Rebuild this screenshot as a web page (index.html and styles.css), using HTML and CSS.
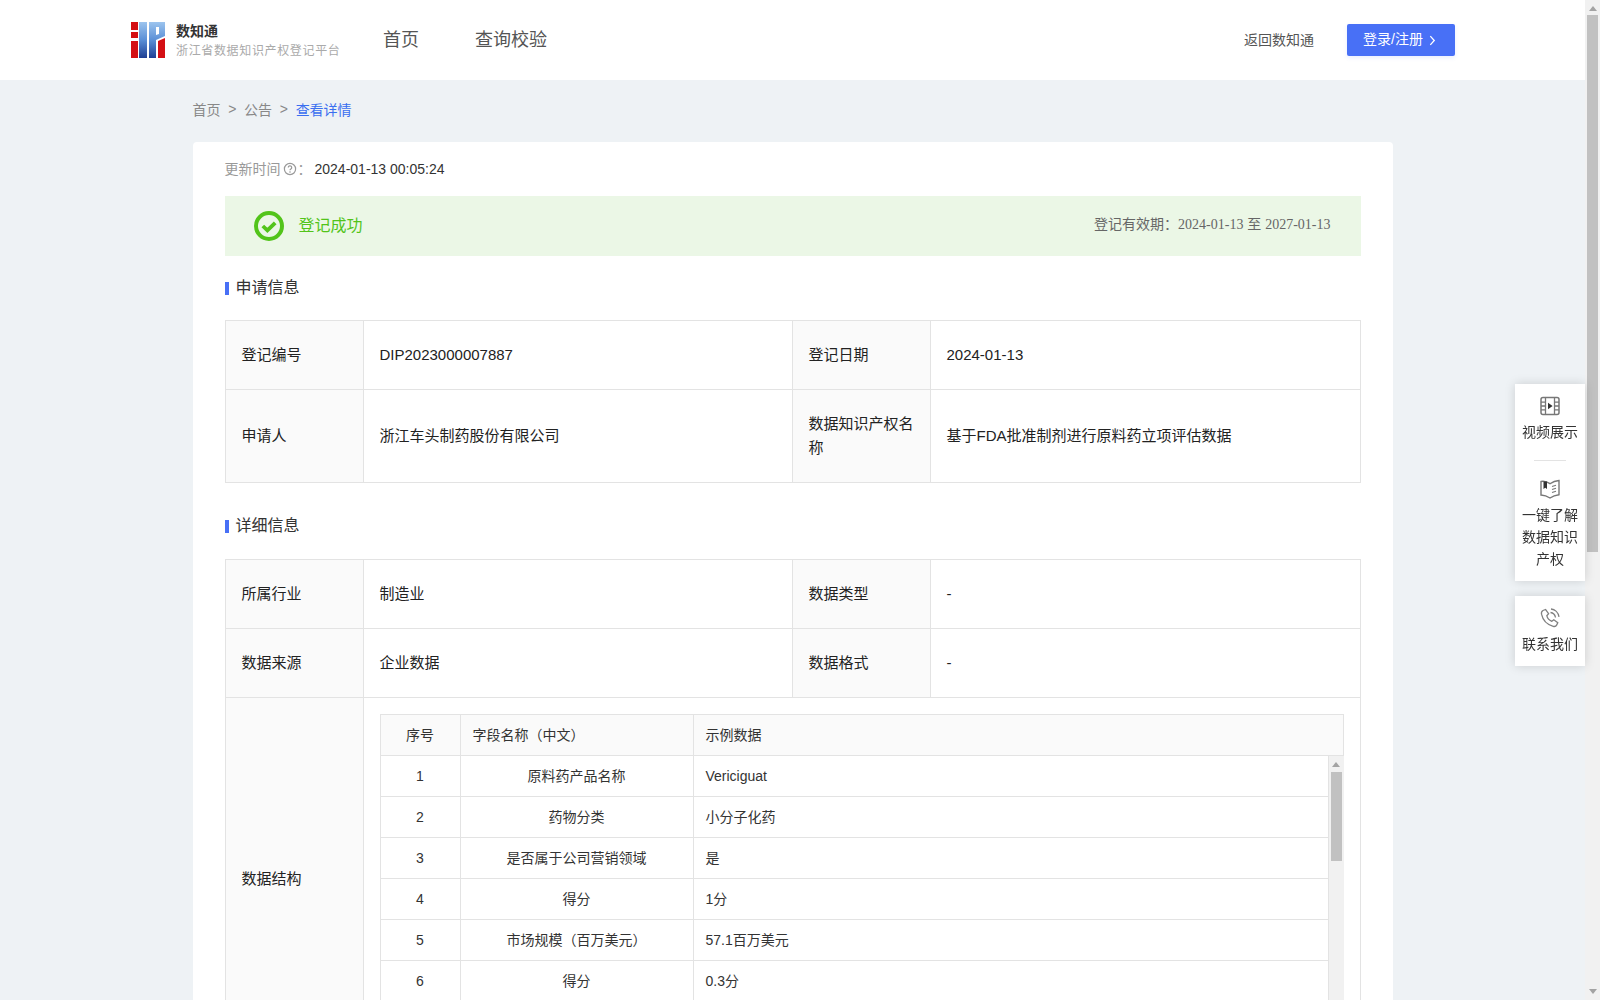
FILE: index.html
```html
<!DOCTYPE html>
<html lang="zh-CN">
<head>
<meta charset="utf-8">
<title>数知通</title>
<link rel="stylesheet" href="styles.css">
</head>
<body>
<div class="page">
<header class="topbar">
  <div class="brand">
    <svg class="logo" viewBox="0 0 34 36" width="34" height="36" aria-hidden="true">
      <defs>
        <linearGradient id="lb" x1="0" y1="0" x2="0" y2="1">
          <stop offset="0" stop-color="#9cc4ee"/>
          <stop offset=".5" stop-color="#5a8fd6"/>
          <stop offset="1" stop-color="#1f3f94"/>
        </linearGradient>
      </defs>
      <rect x="0" y="0" width="7" height="8" fill="#d40f14"/>
      <rect x="0" y="10" width="7" height="6" fill="#d40f14"/>
      <rect x="0" y="19" width="7" height="17" fill="#d40f14"/>
      <rect x="8" y="0" width="8" height="36" fill="url(#lb)"/>
      <path d="M18 0h16v14l-9 4v18h-7zM25 5v8l3-1V5z" fill="url(#lb)" fill-rule="evenodd"/>
      <path d="M27 19l7-3v20h-7z" fill="#d40f14"/>
    </svg>
    <div class="brand-text">
      <div class="brand-name">数知通</div>
      <div class="brand-sub">浙江省数据知识产权登记平台</div>
    </div>
  </div>
  <nav class="nav">
    <a class="nav-link">首页</a>
    <a class="nav-link">查询校验</a>
  </nav>
  <div class="top-actions">
    <a class="back-link">返回数知通</a>
    <button class="login-btn"><span class="login-label">登录/注册</span>
      <svg viewBox="0 0 8 12" width="7" height="11" aria-hidden="true"><path d="M1.5 1l4.5 5-4.5 5" fill="none" stroke="#fff" stroke-width="1.5"/></svg>
    </button>
  </div>
</header>

<main class="wrap">
  <div class="crumbs">
    <span>首页</span><span class="sep">&gt;</span><span>公告</span><span class="sep">&gt;</span><span class="current">查看详情</span>
  </div>

  <section class="card">
    <div class="updated">
      <span class="updated-label raise-sm">更新时间</span>
      <svg class="help" viewBox="0 0 14 14" width="14" height="14" aria-hidden="true">
        <circle cx="7" cy="7" r="5.6" fill="none" stroke="#999" stroke-width="1.2"/>
        <path d="M5.3 5.6a1.7 1.7 0 1 1 2.6 1.4c-.6.4-.9.7-.9 1.3" fill="none" stroke="#999" stroke-width="1.2"/>
        <circle cx="7" cy="10" r=".8" fill="#999"/>
      </svg>
      <span class="updated-label colon raise-sm">：</span>
      <span class="updated-value">2024-01-13 00:05:24</span>
    </div>

    <div class="banner">
      <div class="banner-status">
        <svg viewBox="0 0 30 30" width="30" height="30" aria-hidden="true">
          <circle cx="15" cy="15" r="13" fill="none" stroke="#52c41a" stroke-width="4"/>
          <path d="M8.8 15l4.6 4.4 7.8-7.6" fill="none" stroke="#52c41a" stroke-width="3.8"/>
        </svg>
        <span class="raise">登记成功</span>
      </div>
      <div class="banner-valid raise-lg">登记有效期：<span class="serif">2024-01-13</span> 至 <span class="serif">2027-01-13</span></div>
    </div>

    <h2 class="section-head first"><span class="raise">申请信息</span></h2>
    <table class="info">
      <colgroup><col class="c-label"><col class="c-value"><col class="c-label"><col></colgroup>
      <tr>
        <th>登记编号</th><td>DIP2023000007887</td>
        <th>登记日期</th><td>2024-01-13</td>
      </tr>
      <tr>
        <th>申请人</th><td>浙江车头制药股份有限公司</td>
        <th>数据知识产权名称</th><td>基于FDA批准制剂进行原料药立项评估数据</td>
      </tr>
    </table>

    <h2 class="section-head"><span class="raise">详细信息</span></h2>
    <table class="info">
      <colgroup><col class="c-label"><col class="c-value"><col class="c-label"><col></colgroup>
      <tr>
        <th>所属行业</th><td>制造业</td>
        <th>数据类型</th><td>-</td>
      </tr>
      <tr>
        <th>数据来源</th><td>企业数据</td>
        <th>数据格式</th><td>-</td>
      </tr>
      <tr>
        <th>数据结构</th>
        <td colspan="3" class="struct-cell">
          <table class="fields fields-head">
            <colgroup><col class="f-no"><col class="f-name"><col></colgroup>
            <tr><th class="center">序号</th><th>字段名称（中文）</th><th>示例数据</th></tr>
          </table>
          <div class="fields-scroll">
            <table class="fields fields-body">
              <colgroup><col class="f-no"><col class="f-name"><col></colgroup>
              <tr><td class="center">1</td><td class="center">原料药产品名称</td><td>Vericiguat</td></tr>
              <tr><td class="center">2</td><td class="center">药物分类</td><td>小分子化药</td></tr>
              <tr><td class="center">3</td><td class="center">是否属于公司营销领域</td><td>是</td></tr>
              <tr><td class="center">4</td><td class="center">得分</td><td>1分</td></tr>
              <tr><td class="center">5</td><td class="center">市场规模（百万美元）</td><td>57.1百万美元</td></tr>
              <tr><td class="center">6</td><td class="center">得分</td><td>0.3分</td></tr>
            </table>
            <div class="vbar vbar-inner" aria-hidden="true">
              <div class="vbar-up"></div>
              <div class="vbar-thumb thumb-inner"></div>
            </div>
          </div>
        </td>
      </tr>
    </table>
  </section>
</main>
</div>

<div class="vbar vbar-page" aria-hidden="true">
  <div class="vbar-up"></div>
  <div class="vbar-thumb thumb-page"></div>
  <div class="vbar-down"></div>
</div>

<aside class="side">
  <div class="side-card">
    <div class="side-item">
      <svg viewBox="0 0 20 20" width="20" height="20" aria-hidden="true">
        <rect x="1" y="1.5" width="18" height="17" rx="2" fill="none" stroke="#777" stroke-width="1.5"/>
        <path d="M5.5 2v16M14.5 2v16M1 6.2h4.5M1 10h4.5M1 13.8h4.5M14.5 6.2H19M14.5 10H19M14.5 13.8H19" stroke="#777" stroke-width="1.3"/>
        <path d="M8 6.8l4.6 3.2L8 13.2z" fill="#333"/>
      </svg>
      <span>视频展示</span>
    </div>
    <div class="side-rule"></div>
    <div class="side-item">
      <svg viewBox="0 0 20 20" width="20" height="20" aria-hidden="true">
        <path d="M1 2.5c3-.6 6 .2 9 2.2 2.500-1.800 5.600-3 9-3.200v14.200c-3.400.400-6.400 1.500-9 3.300-2.800-1.800-5.800-2.800-9-3z" fill="none" stroke="#777" stroke-width="1.4"/>
        <path d="M3.500 2.500h3.500v7.500l-1.750-1.300-1.750 1.300z" fill="#333"/>
        <path d="M12 7.500l4-1.200M12 10.500l4-1.200M12 13.500l4-1.200" stroke="#777" stroke-width="1.200"/>
      </svg>
      <span class="side-text">一键了解<br>数据知识<br>产权</span>
    </div>
  </div>
  <div class="side-card">
    <div class="side-item">
      <svg viewBox="0 0 20 20" width="20" height="20" aria-hidden="true">
        <path d="M3 2.500l2.600-1 3 4.200-1.800 2c.600 2.600 2.400 4.600 5 5.600l2-1.600 4 3-1.200 2.400c-.600 1.200-2 1.600-3.400 1.200C7.300 16.800 2.800 12 1.500 6.200 1.200 4.700 1.800 3.200 3 2.500z" fill="none" stroke="#808080" stroke-width="1.300"/>
        <path d="M10.500 4.500c2.500.300 4.500 2.200 5 5M11 1c4 .300 7.300 3.500 8 7.800" fill="none" stroke="#808080" stroke-width="1.300"/>
      </svg>
      <span>联系我们</span>
    </div>
  </div>
</aside>
</body>
</html>
```
FILE: styles.css
```css
* { box-sizing: border-box; }
html { background: #eef2f5; }
body {
  display: flex;
  height: 100vh;
  margin: 0;
  overflow: hidden;
  font-family: "Liberation Sans", "Noto Sans CJK SC", sans-serif;
  font-size: 14px;
  color: #333;
  background: #eef2f5;
}
.page {
  flex: 1;
  min-width: 0;
  height: 100vh;
  overflow: hidden;
}
.vbar {
  display: flex;
  flex-direction: column;
  flex: none;
  width: 15px;
  background: #f1f1f1;
}
.vbar-page { height: 100vh; }
.vbar-up,
.vbar-down {
  flex: none;
  width: 0;
  height: 11px;
  margin: 0 auto;
  border-left: 4px solid transparent;
  border-right: 4px solid transparent;
}
.vbar-up { margin-bottom: 4px; border-top: 6px solid #f1f1f1; border-bottom: 5px solid #a3a3a3; }
.vbar-down { margin-top: auto; border-top: 5px solid #a3a3a3; border-bottom: 6px solid #f1f1f1; }
.vbar-thumb { flex: none; margin: 0 2px; background: #c1c1c1; }
.thumb-page { height: 537px; }
.thumb-inner { height: 89px; margin-top: 1px; }

.topbar {
  display: flex;
  align-items: center;
  height: 80px;
  padding: 0 130px 0 131px;
  background: #fff;
}
.brand { display: flex; align-items: center; }
.logo { display: block; }
.brand-text { width: 207px; margin-left: 11px; padding-top: 1px; }
.brand-name { font-size: 14px; line-height: 20px; font-weight: 700; color: #333; }
.brand-sub { font-size: 12px; line-height: 20px; letter-spacing: .65px; color: #aaa; }
.nav { display: flex; gap: 56px; padding-bottom: 4px; }
.nav-link { font-size: 18px; color: #555; }
.top-actions { display: flex; align-items: center; margin-left: auto; }
.back-link { margin-right: 33px; padding-bottom: 2px; font-size: 14px; color: #555; }
.login-btn {
  display: flex;
  align-items: center;
  gap: 6px;
  width: 108px;
  height: 32px;
  padding: 0 0 0 16px;
  border: 0;
  border-radius: 2px;
  background: #4870f6;
  color: #fff;
  font: inherit;
  font-size: 14px;
  box-shadow: 0 2px 4px rgba(72, 112, 246, .12);
}
.login-label { padding-bottom: 5px; }
.wrap { width: 1200px; margin: 0 auto; }
.crumbs {
  display: flex;
  align-items: center;
  height: 62px;
  padding-bottom: 4px;
  color: #888;
}
.sep { margin: 0 7.7px; }
.current { color: #3a6ff0; }
.card {
  padding: 16px 32px;
  background: #fff;
  border-radius: 4px;
}
.updated { display: flex; align-items: center; height: 22px; }
.updated-label { color: #999; }
.help { margin: 0 1px 0 2px; }
.colon { width: 17px; }
.updated-value { color: #333; }
.banner {
  display: flex;
  align-items: center;
  justify-content: space-between;
  height: 60px;
  margin-top: 16px;
  padding: 0 30px 0 29px;
  background: #ebf7e6;
}
.banner-status {
  display: flex;
  align-items: center;
  gap: 15px;
  font-size: 16px;
  color: #52c41a;
}
.banner-status svg { display: block; }
.banner-valid { color: #666; font-size: 14px; }
.raise-sm { padding-bottom: 2px; }
.raise { padding-bottom: 5px; }
.raise-lg { padding-bottom: 6px; }
.serif { font-family: "Liberation Serif", "Noto Sans CJK SC", serif; }
.section-head {
  display: flex;
  align-items: center;
  height: 22px;
  margin: 32px 0 22px;
  font-size: 16px;
  font-weight: 400;
  color: #333;
}
.section-head.first { margin: 21px 0; }
.section-head::before {
  content: "";
  width: 4px;
  height: 13px;
  margin: 1px 7px 0 0;
  background: #4870f6;
}
.info {
  width: 1136px;
  table-layout: fixed;
  border-collapse: collapse;
  font-size: 15px;
}
.c-label { width: 138px; }
.c-value { width: 429px; }
.info > tbody > tr > th,
.info > tbody > tr > td {
  padding: 22px 16px;
  line-height: 24px;
  border: 1px solid #e3e3e3;
  font-weight: 400;
  text-align: left;
  color: #222;
}
.info > tbody > tr > th { background: #fafafa; }
.info > tbody > tr > td.struct-cell { padding: 16px; }
.fields {
  width: 100%;
  table-layout: fixed;
  border-collapse: collapse;
  font-size: 14px;
}
.f-no { width: 80px; }
.f-name { width: 233px; }
.fields th,
.fields td {
  height: 41px;
  padding: 0 12px;
  border: 1px solid #e3e3e3;
  font-weight: 400;
  text-align: left;
  color: #333;
}
.fields .center { text-align: center; }
.fields-head th { background: #fafafa; }
.fields-body { flex: 1; min-width: 0; align-self: flex-start; }
.fields-body tr:first-child td { border-top: 0; height: 40px; }
.fields-scroll {
  display: flex;
  height: 288px;
  overflow: hidden;
  border-bottom: 1px solid #e3e3e3;
}
.side {
  position: fixed;
  top: 384px;
  right: 15px;
  display: flex;
  flex-direction: column;
  gap: 15px;
  width: 70px;
}
.side-card {
  padding: 12px 0 11px;
  background: #fff;
  box-shadow: 0 0 10px rgba(0, 0, 0, .15);
}
.side-item {
  display: flex;
  flex-direction: column;
  align-items: center;
  gap: 5px;
  font-size: 14px;
  line-height: 22px;
  text-align: center;
  color: #333;
}
.side-item svg { display: block; }
.side-text { display: block; }
.side-rule { width: 32px; height: 1px; margin: 17px auto 18px; background: #e3e3e3; }
```
